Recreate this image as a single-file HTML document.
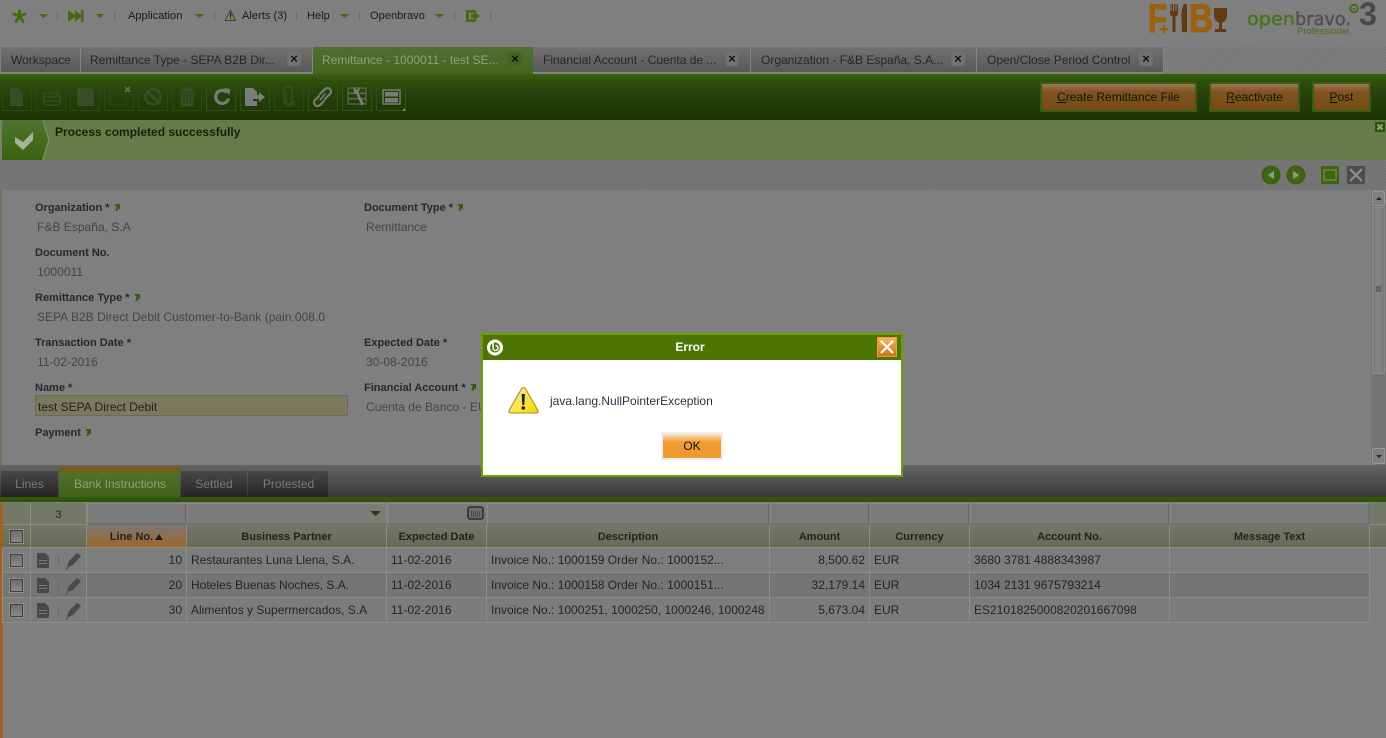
<!DOCTYPE html>
<html><head><meta charset="utf-8"><title>Remittance</title>
<style>
html,body{margin:0;padding:0;width:1386px;height:738px;overflow:hidden;background:#7f7f7f}
body{font-family:"Liberation Sans",sans-serif;font-size:12px;position:relative;color:#2b2b2b}
.a{position:absolute;white-space:nowrap}
.stripe{background-image:repeating-linear-gradient(135deg,rgba(255,255,255,.05) 0 1px,rgba(0,0,0,.05) 1px 2px)}
.tab{position:absolute;top:47px;height:26px;line-height:27px;background:linear-gradient(#727272,#585858);color:#262626;border-right:1px solid #858585;border-bottom:1px solid #858585;box-sizing:border-box;padding-left:10px;white-space:nowrap}
.tab.on{background:linear-gradient(#507034,#44641e);color:#8fa178;border-right:0;border-bottom:0;height:27px}
.x{position:absolute;top:5px;width:14px;height:14px;border-radius:4px;background:#727272;color:#111;font-size:13px;font-weight:bold;line-height:13px;text-align:center;padding:0}
.tb{position:absolute;top:83px;width:30px;height:28px;border:1px solid #324f1c;box-sizing:border-box}
.tb.dim{border-color:#2b4912}
.btn{position:absolute;top:83px;height:28px;box-sizing:border-box;background:linear-gradient(#9c7a52,#7f5420 30%,#784b14);outline:1px solid #3a5a1a;outline-offset:0;border:1px solid #3a5a1a;text-align:center;line-height:26px;color:#141414}
.lb{position:absolute;font-weight:bold;font-size:11px;color:#282828;white-space:nowrap}
.v{position:absolute;color:#454545;white-space:nowrap;letter-spacing:.03px}
.c{position:absolute;box-sizing:border-box;white-space:nowrap;overflow:hidden;border-right:1px solid #8c8f7c;border-bottom:1px solid #8c8f7c}
.h{top:525px;height:23px;line-height:24px;font-weight:bold;font-size:11px;text-align:center;background:linear-gradient(#757868,#666a58);color:#222}
.f{top:503px;height:22px;background:#7b7b7b;border:1px solid #8a8a8a;border-bottom:2px solid #6f6f6f;border-right:2px solid #6f6f6f}
.r{height:25px;line-height:24px;color:#242424;padding:0 4px}
.cb{position:absolute;width:11px;height:11px;border:1px solid #3f3f3f;outline:1px solid #8f8f8f;background:linear-gradient(#6e6e6e,#888)}
.m{position:absolute;top:10px;font-size:11px;color:#1a1a1a;white-space:nowrap;letter-spacing:.05px}
</style></head><body>

<!-- top menu -->
<svg class="a" style="left:0;top:0" width="500" height="30">
<g stroke="#446a12" stroke-width="3" stroke-linecap="round"><path d="M19.500 16V11M19.500 16l-5.500-2M19.500 16l5.500-2M19.500 16l-3.500 5.500M19.500 16l3.500 5.500"/></g>
<path d="M39 14h9l-4.500 4z M96 14h8.500l-4.500 4z M195 14h9l-4.500 4z M340 14h9l-4.500 4z M435 14h9l-4.500 4z" fill="#446a12"/>
<path d="M68 10l8 6-8 6zM75 10l7 6-7 6z" fill="#446a12"/><rect x="81" y="10" width="2.500" height="12" fill="#446a12"/>
<g stroke="#6b6b6b"><path d="M57.500 11v10M114.500 11v10M214.500 11v10M296.500 11v10M359.500 11v10M454.500 11v10M490.500 11v10"/></g>
<path d="M230.500 10.500l5 10h-10.500z" fill="#8a8555" stroke="#3f3f3f"/><rect x="230" y="13" width="1.200" height="4" fill="#222"/><rect x="230" y="18" width="1.200" height="1.200" fill="#222"/>
<path d="M466 10h10v3h-7v6h7v3h-10z" fill="#446a12"/><path d="M471 14h3v-3l6 5-6 5v-3h-3z" fill="#446a12"/>
</svg>
<div class="m" style="left:128px">Application</div>
<div class="m" style="left:242px">Alerts (3)</div>
<div class="m" style="left:307px">Help</div>
<div class="m" style="left:370px">Openbravo</div>

<!-- logos -->
<svg class="a" style="left:1140px;top:0" width="246" height="40">
<text x="8" y="32" font-family="Liberation Sans" font-weight="bold" font-size="40" fill="#9c600e" stroke="#9c600e" stroke-width="1.300" textLength="19" lengthAdjust="spacingAndGlyphs">F</text>
<path d="M19 28h3.500v-3h2.500v3H28.500v2.500H25v3h-2.500v-3H19z" fill="#9c600e"/>
<path d="M30 4v9c0 2 1 3 2.500 3.500V32h3V16.500c1.500-.5 2.500-1.500 2.500-3.500V4h-1.500v7h-1V4h-1.500v7h-1V4h-1.500v7h-1V4z" fill="#653a10"/>
<path d="M44 4c-2.500 4-3 10-2.500 15l.5 13h5V4z" fill="#653a10"/>
<text x="49" y="32" font-family="Liberation Sans" font-weight="bold" font-size="40" fill="#9c600e" stroke="#9c600e" stroke-width="1.300" textLength="24" lengthAdjust="spacingAndGlyphs">B</text>
<path d="M74 8h13v8c0 4-3 6-5 6.500V29h4v3H75v-3h4v-6.500c-2-.5-5-2.500-5-6.500z" fill="#653a10"/>
<text x="107" y="25" font-family="DejaVu Sans" font-size="18" fill="#47721f" stroke="#47721f" stroke-width=".4" textLength="48" lengthAdjust="spacingAndGlyphs">open</text>
<text x="155" y="25" font-family="DejaVu Sans" font-size="18" fill="#505050" stroke="#505050" stroke-width=".4" textLength="56" lengthAdjust="spacingAndGlyphs">bravo.</text>
<text x="157" y="34" font-family="Liberation Sans" font-size="9.500" fill="#456c1e" textLength="52">Professional</text>
<circle cx="214" cy="8.500" r="3.800" fill="none" stroke="#406a18" stroke-width="1.800"/><circle cx="214" cy="9" r="1.200" fill="#406a18"/>
<text x="219" y="25" font-family="Liberation Sans" font-weight="bold" font-size="32" fill="#484848" textLength="18" lengthAdjust="spacingAndGlyphs">3</text>
</svg>

<!-- tab row -->
<div class="a stripe" style="left:1163px;top:47px;width:223px;height:27px;background-color:#7a7a7a"></div>
<div class="tab" style="left:1px;width:80px">Workspace</div>
<div class="tab" style="left:81px;width:232px;padding-left:9px">Remittance Type - SEPA B2B Dir...<span class="x" style="left:206px">×</span></div>
<div class="tab on" style="left:313px;width:220px;padding-left:9px">Remittance - 1000011 - test SE...<span class="x" style="left:195px;background:#426420">×</span></div>
<div class="tab" style="left:533px;width:218px">Financial Account - Cuenta de ...<span class="x" style="left:192px">×</span></div>
<div class="tab" style="left:751px;width:226px">Organization - F&amp;B España, S.A...<span class="x" style="left:200px">×</span></div>
<div class="tab" style="left:977px;width:187px">Open/Close Period Control<span class="x" style="left:162px">×</span></div>

<!-- toolbar -->
<div class="a" style="left:0;top:74px;width:1386px;height:46px;background:linear-gradient(#38600f 0,#2c4e0a 8px,#25430a 20px,#1c3403 100%)"></div>
<div class="tb dim" style="left:2px"></div><div class="tb dim" style="left:36px"></div><div class="tb dim" style="left:70px"></div><div class="tb dim" style="left:104px"></div><div class="tb dim" style="left:138px"></div><div class="tb dim" style="left:172px"></div>
<div class="tb" style="left:206px"></div><div class="tb" style="left:240px"></div><div class="tb dim" style="left:274px"></div><div class="tb" style="left:308px"></div><div class="tb" style="left:342px"></div><div class="tb" style="left:376px"></div>
<svg class="a" style="left:0;top:80px" width="410" height="40">
<g fill="#384e28">
<path d="M10 8h8l5 5v12a1 1 0 0 1-1 1H11a1 1 0 0 1-1-1z"/>
<path d="M78 8h13l3 3v14a1 1 0 0 1-1 1H78a1 1 0 0 1-1-1V9a1 1 0 0 1 1-1z"/>
</g>
<g fill="none" stroke="#384e28" stroke-width="1.300"><path d="M44 13h14M44 13v12h16v-9M44 17h16M44 21h16"/><circle cx="58" cy="13" r="2.500"/></g>
<rect x="110" y="11" width="16" height="14" fill="none" stroke="#2e4818"/>
<path d="M125 7l5 5M130 7l-5 5" stroke="#5a6a4c" stroke-width="2"/>
<circle cx="153" cy="17" r="7.500" fill="none" stroke="#384e28" stroke-width="2.500"/><path d="M148 12l10 10" stroke="#384e28" stroke-width="2.500"/>
<path d="M179 11h16M182 8h10v3h-10zM181 13h12v13h-12z" fill="#384e28" stroke="#384e28"/>
<path d="M184 14v10M187 14v10M190 14v10" stroke="#213d0a"/>
<path d="M227 12.500a6.500 6.500 0 1 0 1.500 6" fill="none" stroke="#7a7a7a" stroke-width="3.200"/><path d="M224 8l6 1-.5 6.500z" fill="#7a7a7a"/>
<path d="M245 8h8l4 4v4h-4v5h4v5h-12z" fill="#7c7c7c"/><path d="M253 15h6v-3l6 5-6 5v-3h-6z" fill="#7c7c7c"/>
<path d="M286 14v8a3 3 0 0 0 6 0V11a4 4 0 0 0-8 0v11a5 5 0 0 0 10 0" fill="none" stroke="#384e28" stroke-width="1.500" transform="translate(0 -1)"/>
<g fill="none" stroke="#7a7a7a" stroke-width="2.200" stroke-linecap="round"><path d="M319 16l-4 4a3.500 3.500 0 0 0 5 5l4-4"/><path d="M325 19l5-5a3.500 3.500 0 0 0-5-5l-5 5"/><path d="M320 20l5-6" stroke-width="1.500"/></g>
<g fill="none" stroke="#5e6654" stroke-width="1.200"><path d="M348 8h18v5h-18zM348 13.500h18v5h-18zM348 19h18v5h-18z"/></g>
<path d="M354 7l3 3 3-3c0 3-1 4-2 5l6 12-2.500 1.500-5.500-12c-2 0-3-3-2-6.500z" fill="#7e7e7e"/>
<rect x="383" y="10" width="17" height="14" fill="none" stroke="#7e7e7e" stroke-width="1.400"/><rect x="385" y="12" width="13" height="4.500" fill="#7a7a7a"/><rect x="385" y="18" width="13" height="4.500" fill="#7a7a7a"/>
<path d="M405 28v3h-3z" fill="#909090"/>
</svg>
<div class="btn" style="left:1041px;width:155px"><u>C</u>reate Remittance File</div>
<div class="btn" style="left:1210px;width:89px"><u>R</u>eactivate</div>
<div class="btn" style="left:1313px;width:57px"><u>P</u>ost</div>

<!-- message bar -->
<div class="a" style="left:0;top:120px;width:1386px;height:40px;background:#667a4a"></div>
<div class="a" style="left:0;top:120px;width:2px;height:40px;background:#7c7f6a"></div>
<svg class="a" style="left:2px;top:120px" width="48" height="40"><defs><linearGradient id="hx" x1="0" y1="0" x2="0" y2="1"><stop offset="0" stop-color="#4f7530"/><stop offset="1" stop-color="#38630d"/></linearGradient></defs><path d="M0 0h40l6 20-6 20H0z" fill="url(#hx)"/><path d="M41 0l6 20-6 20" fill="none" stroke="#7e9366"/><path d="M13 17l8 5 10-10v8L21 30l-8-7z" fill="#a8b19a"/></svg>
<div class="a" style="left:55px;top:125px;font-weight:bold;color:#1a2008">Process completed successfully</div>
<svg class="a" style="left:1375px;top:122px" width="10" height="10"><rect width="10" height="10" fill="#2c5508"/><path d="M2.500 2.500l5 5M7.500 2.500l-5 5" stroke="#94a27e" stroke-width="2"/></svg>

<!-- form head -->
<div class="a stripe" style="left:0;top:160px;width:1386px;height:30px;background-color:#747474"></div>
<svg class="a" style="left:1255px;top:160px" width="110" height="30">
<defs><radialGradient id="cg"><stop offset="0" stop-color="#466e1e"/><stop offset="1" stop-color="#3a5e0f"/></radialGradient></defs>
<circle cx="16" cy="15" r="9.500" fill="url(#cg)"/><path d="M19 11v8l-6-4z" fill="#909e7c"/>
<circle cx="41" cy="15" r="9.500" fill="url(#cg)"/><path d="M38 11v8l6-4z" fill="#909e7c"/>
<rect x="66" y="6" width="18" height="18" fill="#3f6412"/><rect x="69" y="10" width="12" height="10" fill="none" stroke="#84946e"/>
<rect x="92" y="6" width="18" height="18" fill="#4d4d4d"/><path d="M95 9l12 12M107 9l-12 12" stroke="#909090" stroke-width="2.200"/>
</svg>

<!-- form -->
<div class="a" style="left:0;top:190px;width:2px;height:275px;background:#6f7260"></div>
<div class="lb" style="left:35px;top:202px">Organization *</div>
<div class="lb" style="left:364px;top:202px">Document Type *</div>
<div class="v" style="left:37px;top:220px">F&amp;B España, S.A</div>
<div class="v" style="left:366px;top:220px">Remittance</div>
<div class="lb" style="left:35px;top:247px">Document No.</div>
<div class="v" style="left:37px;top:265px">1000011</div>
<div class="lb" style="left:35px;top:292px">Remittance Type *</div>
<div class="v" style="left:37px;top:310px">SEPA B2B Direct Debit Customer-to-Bank (pain.008.0</div>
<div class="lb" style="left:35px;top:337px">Transaction Date *</div>
<div class="lb" style="left:364px;top:337px">Expected Date *</div>
<div class="v" style="left:37px;top:355px">11-02-2016</div>
<div class="v" style="left:366px;top:355px">30-08-2016</div>
<div class="lb" style="left:35px;top:382px">Name *</div>
<div class="lb" style="left:364px;top:382px">Financial Account *</div>
<div class="a" style="left:35px;top:395px;width:313px;height:21px;box-sizing:border-box;border:1px solid #696c55;background:#7a7a5e;padding-left:2px;line-height:22px;color:#1f1f1f">test SEPA Direct Debit</div>
<div class="v" style="left:366px;top:400px">Cuenta de Banco - EUR</div>
<div class="lb" style="left:35px;top:427px">Payment</div>
<svg class="a" style="left:0;top:190px" width="480" height="250"><g fill="#365c10">
<path d="M114 14h6v6l-1.500-2-1 3h-2l1-4.500z"/>
<path d="M457 14h6v6l-1.500-2-1 3h-2l1-4.500z"/>
<path d="M134 104h6v6l-1.500-2-1 3h-2l1-4.500z"/>
<path d="M470 194h6v6l-1.500-2-1 3h-2l1-4.500z"/>
<path d="M85 239h6v6l-1.500-2-1 3h-2l1-4.500z"/>
</g></svg>

<!-- scrollbar -->
<div class="a" style="left:1371px;top:191px;width:15px;height:274px;background:#747474"></div>
<div class="a" style="left:1372px;top:191px;width:13px;height:15px;box-sizing:border-box;border:1px solid #979797;background:#7f7f7f;border-radius:2px"></div>
<div class="a" style="left:1372px;top:207px;width:13px;height:167px;box-sizing:border-box;border:1px solid #8a8a8a;background:linear-gradient(90deg,#7c7c7c,#858585 50%,#777)"></div>
<div class="a" style="left:1372px;top:448px;width:13px;height:16px;box-sizing:border-box;border:1px solid #979797;background:#7f7f7f;border-radius:2px"></div>
<svg class="a" style="left:1372px;top:191px" width="13" height="273"><path d="M4 9l3-3 3 3zM4 264h6l-3 3z" fill="#2a2a2a"/><path d="M4 96h5M4 98h5M4 100h5" stroke="#444"/></svg>

<!-- section tabs -->
<div class="a" style="left:0;top:465px;width:1386px;height:32px;background:linear-gradient(#646464,#3a3a3a)"></div>
<div class="a" style="left:0;top:497px;width:1386px;height:5px;background:linear-gradient(#355a0b,#2e4f09)"></div>
<div class="a" style="left:1px;top:471px;width:57px;height:26px;background:linear-gradient(#484848,#252525);color:#7a7a7a;line-height:26px;text-align:center">Lines</div>
<div class="a" style="left:59px;top:467px;width:121px;height:4px;background:#8e5210"></div>
<div class="a" style="left:59px;top:471px;width:121px;height:26px;background:linear-gradient(#527230,#3f6218);color:#8fa178;line-height:26px;text-align:center;padding-left:1px;box-sizing:border-box">Bank Instructions</div>
<div class="a" style="left:181px;top:471px;width:66px;height:26px;background:linear-gradient(#484848,#252525);color:#7a7a7a;line-height:26px;text-align:center">Settled</div>
<div class="a" style="left:248px;top:471px;width:80px;height:26px;background:linear-gradient(#484848,#252525);color:#7a7a7a;line-height:26px;text-align:center;padding-left:1px;box-sizing:border-box">Protested</div>

<!-- grid -->
<div class="a" style="left:0;top:503px;width:3px;height:235px;background:#a0621e"></div>
<div class="c" style="left:3px;top:503px;width:28px;height:22px;background:#737868"></div>
<div class="c" style="left:31px;top:503px;width:56px;height:22px;background:#737868;text-align:center;line-height:24px;font-size:11px">3</div>
<div class="c f" style="left:87px;width:100px"></div>
<div class="c f" style="left:187px;width:199px"></div>
<div class="c f" style="left:387px;width:99px"></div>
<div class="c f" style="left:487px;width:283px"></div>
<div class="c f" style="left:770px;width:100px"></div>
<div class="c f" style="left:870px;width:100px"></div>
<div class="c f" style="left:970px;width:200px"></div>
<div class="c f" style="left:1170px;width:200px"></div>
<div class="c" style="left:1370px;top:503px;width:16px;height:22px;background:#737868;border-right:0"></div>
<div class="a" style="left:366px;top:504px;width:20px;height:19px;background:#7a7d70"></div>
<div class="a" style="left:466px;top:504px;width:20px;height:18px;background:#7a7d70"></div>
<svg class="a" style="left:366px;top:504px" width="122" height="20"><path d="M4 7h11l-5.500 5z" fill="#2f2f2f"/><rect x="102" y="3" width="15" height="12" rx="2" fill="#6d6d6d" stroke="#1f1f1f" stroke-width="1.300"/><path d="M105 8h9M105 10h9M105 12h9" stroke="#222" stroke-dasharray="1 1"/></svg>

<div class="c h" style="left:3px;width:28px"></div>
<div class="c h" style="left:31px;width:56px"></div>
<div class="c h" style="left:87px;width:100px;background:linear-gradient(#7d7672,#a0662c)">Line No.<span style="display:inline-block;width:0;height:0;border-left:4.500px solid transparent;border-right:4.500px solid transparent;border-bottom:6px solid #1c1c1c;margin-left:2px;vertical-align:0"></span></div>
<div class="c h" style="left:187px;width:200px">Business Partner</div>
<div class="c h" style="left:387px;width:100px">Expected Date</div>
<div class="c h" style="left:487px;width:283px">Description</div>
<div class="c h" style="left:770px;width:100px">Amount</div>
<div class="c h" style="left:870px;width:100px">Currency</div>
<div class="c h" style="left:970px;width:200px">Account No.</div>
<div class="c h" style="left:1170px;width:200px">Message Text</div>
<div class="c h" style="left:1370px;width:16px;border-right:0"></div>
<div class="cb" style="left:10px;top:530px"></div>

<!-- rows -->
<div class="a" style="left:3px;top:548px;width:1367px;height:25px;background:#7d7d7d"></div>
<div class="a" style="left:3px;top:573px;width:1367px;height:25px;background:#757575"></div>
<div class="a" style="left:3px;top:598px;width:1367px;height:25px;background:#7c7c7c"></div>
<div class="a" style="left:2px;top:548px;width:1px;height:75px;background:#8c8f7c"></div>

<div class="c r" style="left:3px;top:548px;width:28px"></div><div class="c r" style="left:31px;top:548px;width:56px"></div>
<div class="c r" style="left:87px;top:548px;width:100px;text-align:right">10</div>
<div class="c r" style="left:187px;top:548px;width:200px">Restaurantes Luna Llena, S.A.</div>
<div class="c r" style="left:387px;top:548px;width:100px">11-02-2016</div>
<div class="c r" style="left:487px;top:548px;width:283px">Invoice No.: 1000159 Order No.: 1000152...</div>
<div class="c r" style="left:770px;top:548px;width:100px;text-align:right">8,500.62</div>
<div class="c r" style="left:870px;top:548px;width:100px">EUR</div>
<div class="c r" style="left:970px;top:548px;width:200px">3680 3781 4888343987</div>
<div class="c r" style="left:1170px;top:548px;width:200px"></div>

<div class="c r" style="left:3px;top:573px;width:28px"></div><div class="c r" style="left:31px;top:573px;width:56px"></div>
<div class="c r" style="left:87px;top:573px;width:100px;text-align:right">20</div>
<div class="c r" style="left:187px;top:573px;width:200px">Hoteles Buenas Noches, S.A.</div>
<div class="c r" style="left:387px;top:573px;width:100px">11-02-2016</div>
<div class="c r" style="left:487px;top:573px;width:283px">Invoice No.: 1000158 Order No.: 1000151...</div>
<div class="c r" style="left:770px;top:573px;width:100px;text-align:right">32,179.14</div>
<div class="c r" style="left:870px;top:573px;width:100px">EUR</div>
<div class="c r" style="left:970px;top:573px;width:200px">1034 2131 9675793214</div>
<div class="c r" style="left:1170px;top:573px;width:200px"></div>

<div class="c r" style="left:3px;top:598px;width:28px"></div><div class="c r" style="left:31px;top:598px;width:56px"></div>
<div class="c r" style="left:87px;top:598px;width:100px;text-align:right">30</div>
<div class="c r" style="left:187px;top:598px;width:200px">Alimentos y Supermercados, S.A</div>
<div class="c r" style="left:387px;top:598px;width:100px">11-02-2016</div>
<div class="c r" style="left:487px;top:598px;width:283px">Invoice No.: 1000251, 1000250, 1000246, 1000248</div>
<div class="c r" style="left:770px;top:598px;width:100px;text-align:right">5,673.04</div>
<div class="c r" style="left:870px;top:598px;width:100px">EUR</div>
<div class="c r" style="left:970px;top:598px;width:200px">ES2101825000820201667098</div>
<div class="c r" style="left:1170px;top:598px;width:200px"></div>

<div class="cb" style="left:10px;top:554px"></div><div class="cb" style="left:10px;top:579px"></div><div class="cb" style="left:10px;top:604px"></div>
<svg class="a" style="left:30px;top:548px" width="60" height="75">
<g><path d="M7 5h8l4 4v10a1 1 0 0 1-1 1H7z" fill="#484848"/><path d="M9 12.500h8M9 15.500h8" stroke="#7d7d7d"/><path d="M28.500 8v9" stroke="#6a6a6a"/><path d="M37 18l2-5 8-8 4 3-8 9-5 2z" fill="#4a4a4a"/><path d="M36 22l2-3" stroke="#4a4a4a"/></g>
<g transform="translate(0 25)"><path d="M7 5h8l4 4v10a1 1 0 0 1-1 1H7z" fill="#484848"/><path d="M9 12.500h8M9 15.500h8" stroke="#7d7d7d"/><path d="M28.500 8v9" stroke="#6a6a6a"/><path d="M37 18l2-5 8-8 4 3-8 9-5 2z" fill="#4a4a4a"/><path d="M36 22l2-3" stroke="#4a4a4a"/></g>
<g transform="translate(0 50)"><path d="M7 5h8l4 4v10a1 1 0 0 1-1 1H7z" fill="#484848"/><path d="M9 12.500h8M9 15.500h8" stroke="#7d7d7d"/><path d="M28.500 8v9" stroke="#6a6a6a"/><path d="M37 18l2-5 8-8 4 3-8 9-5 2z" fill="#4a4a4a"/><path d="M36 22l2-3" stroke="#4a4a4a"/></g>
</svg>

<!-- dialog -->
<div class="a" style="left:481px;top:333px;width:422px;height:144px;box-sizing:border-box;border:2px solid #6d9f00;background:#fff"></div>
<div class="a" style="left:483px;top:335px;width:414px;height:25px;background:#4d7504;color:#fff;font-weight:bold;text-align:center;line-height:24px">Error</div>
<div class="a" style="left:897px;top:335px;width:4px;height:25px;background:#4d7504"></div>
<svg class="a" style="left:486px;top:337px" width="18" height="20"><circle cx="9" cy="10.500" r="6.500" fill="none" stroke="#fff" stroke-width="3"/><path d="M7 4v7a2.500 2.500 0 1 0 2.500-2.500" fill="none" stroke="#fff" stroke-width="1.500"/></svg>
<svg class="a" style="left:877px;top:337px" width="20" height="20"><defs><linearGradient id="og" x1="0" y1="0" x2="0" y2="1"><stop offset="0" stop-color="#f7b560"/><stop offset="1" stop-color="#c8780f"/></linearGradient></defs><rect x=".5" y=".5" width="19" height="19" fill="url(#og)" stroke="#e8a040"/><path d="M4 4l12 12M16 4L4 16" stroke="#fff" stroke-width="2.200"/></svg>
<svg class="a" style="left:508px;top:386px" width="32" height="29"><defs><linearGradient id="yg" x1="0" y1="0" x2="1" y2="1"><stop offset="0" stop-color="#efe3b5"/><stop offset=".6" stop-color="#f6e63a"/><stop offset="1" stop-color="#ecd900"/></linearGradient></defs><path d="M15.500 1.500c1 0 2 1 2.500 2l12 21c.5 1 0 2.500-1.500 2.500h-26c-1.500 0-2-1.500-1.500-2.500l12-21c.5-1 1.500-2 2.500-2z" fill="url(#yg)" stroke="#b8841c" stroke-width="1"/><path d="M13.700 8h3.200l-.6 11h-2z" fill="#222"/><circle cx="15.300" cy="22" r="1.800" fill="#222"/></svg>
<div class="a" style="left:550px;top:394px;color:#2b3040">java.lang.NullPointerException</div>
<div class="a" style="left:661px;top:432px;width:62px;height:28px;box-sizing:border-box;border:2px solid #eee;background:linear-gradient(#fbe5c8,#f09a30 35%,#f19a30);text-align:center;line-height:24px;color:#151515;font-size:12px">OK</div>

</body></html>
